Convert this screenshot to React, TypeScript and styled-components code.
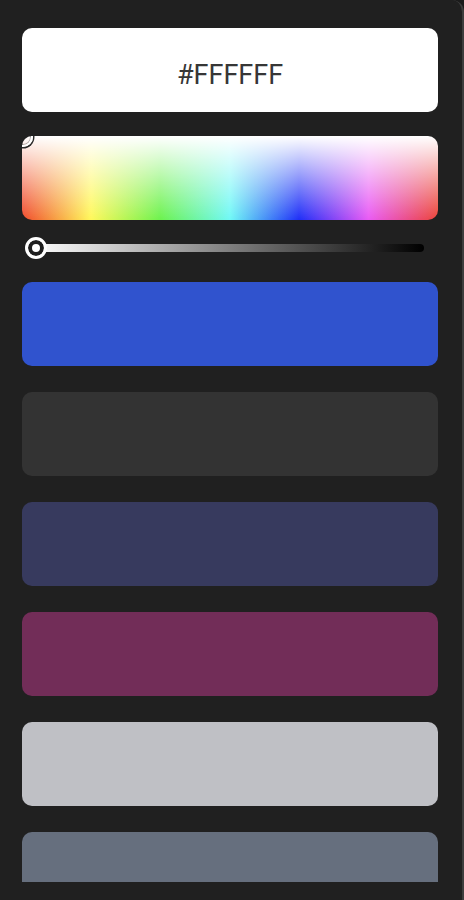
import React from "react";
import styled, { createGlobalStyle } from "styled-components";

const Global = createGlobalStyle`
  html, body { margin: 0; padding: 0; background: #1b1b1b; }
  body { font-family: Roboto, "Liberation Sans", Arial, sans-serif; }
`;

const Panel = styled.div`
  box-sizing: border-box;
  width: 464px;
  height: 900px;
  background: #202020;
  border-right: 2px solid #3d3d3d;
  border-top-right-radius: 12px;
  padding: 28px 24px 18px 22px;
  display: flex;
  flex-direction: column;
`;

const Scroll = styled.div`
  flex: 1;
  overflow: hidden;
  display: flex;
  flex-direction: column;
`;

const HexInput = styled.div`
  flex: none;
  height: 84px;
  box-sizing: border-box;
  padding-top: 9px;
  border-radius: 10px;
  background: #ffffff;
  display: flex;
  align-items: center;
  justify-content: center;
  font-family: Roboto, "Liberation Sans", Arial, sans-serif;
  font-size: 27px;
  line-height: 28px;
  color: #363636;
`;

const SpectrumWrap = styled.div`
  flex: none;
  position: relative;
  margin-top: 24px;
  height: 84px;
  overflow: hidden;
`;

const Spectrum = styled.div`
  height: 100%;
  border-radius: 10px;
  background:
    linear-gradient(to bottom, #ffffff 0%, rgba(255, 255, 255, 0) 100%),
    linear-gradient(
      to right,
      #f04a2c 0%,
      #fff85a 16.6%,
      #6cf24e 33.3%,
      #6ff8f6 50%,
      #1e2ef7 66.6%,
      #e95af4 83.3%,
      #ec4336 100%
    );
`;

const Pointer = styled.div`
  position: absolute;
  left: -9px;
  top: -9px;
  width: 16px;
  height: 16px;
  border-radius: 50%;
  border: 2px solid #ffffff;
  box-shadow: 0 0 0 1.5px #2a2a2a, inset 0 0 0 1px rgba(0, 0, 0, 0.3);
`;

const SliderRow = styled.div`
  flex: none;
  position: relative;
  height: 22px;
  margin: 17px 14px 23px 10px;
  display: flex;
  align-items: center;
`;

const Track = styled.div`
  flex: 1;
  height: 8px;
  border-radius: 4px;
  background: linear-gradient(to right, #ffffff 0%, #808080 50%, #000000 100%);
`;

const Thumb = styled.div`
  position: absolute;
  left: -7px;
  top: 0;
  box-sizing: border-box;
  width: 22px;
  height: 22px;
  border-radius: 50%;
  border: 3px solid #ffffff;
  background: #ffffff;
  box-shadow: inset 0 0 0 4px #1f1f1f;
`;

const Swatches = styled.div`
  display: flex;
  flex-direction: column;
  gap: 26px;
`;

const Swatch = styled.div<{ $color: string }>`
  flex: none;
  height: 84px;
  border-radius: 10px;
  background: ${(p) => p.$color};
`;

const colors = ["#3053ce", "#333333", "#373a5e", "#722d58", "#bfc0c5", "#666f7e"];

export default function App() {
  return (
    <>
      <Global />
      <Panel>
        <Scroll>
          <HexInput>#FFFFFF</HexInput>
          <SpectrumWrap>
            <Spectrum />
            <Pointer />
          </SpectrumWrap>
          <SliderRow>
            <Track />
            <Thumb />
          </SliderRow>
          <Swatches>
            {colors.map((c) => (
              <Swatch key={c} $color={c} />
            ))}
          </Swatches>
        </Scroll>
      </Panel>
    </>
  );
}
